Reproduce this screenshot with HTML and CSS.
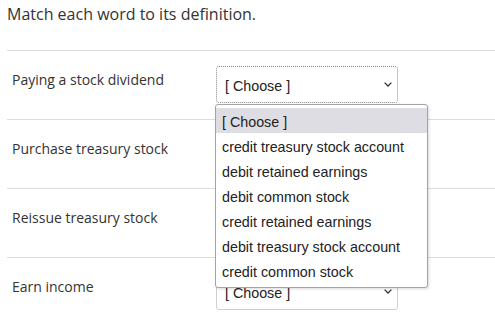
FILE: index.html
```html
<!DOCTYPE html>
<html lang="en">
<head>
    <meta charset="UTF-8">
    <meta name="viewport" content="width=device-width, initial-scale=1.0">
    <title>Matching question</title>
    <link rel="stylesheet" href="styles.css">
</head>
<body>
    <div class="quiz">
        <p class="prompt">Match each word to its definition.</p>
        <div class="answers">
            <div class="answer">
                <span class="word">Paying a stock dividend</span>
                <div class="picker">
                    <div class="select focused">
                        <span>[ Choose ]</span>
                        <svg class="chevron" width="8" height="5" viewBox="0 0 8 5"><path d="M0.6 0.6 L4 4 L7.4 0.6" fill="none" stroke="#333" stroke-width="1.3"/></svg>
                    </div>
                    <ul class="menu">
                        <li class="active">[ Choose ]</li>
                        <li>credit treasury stock account</li>
                        <li>debit retained earnings</li>
                        <li>debit common stock</li>
                        <li>credit retained earnings</li>
                        <li>debit treasury stock account</li>
                        <li>credit common stock</li>
                    </ul>
                </div>
            </div>
            <div class="answer">
                <span class="word">Purchase treasury stock</span>
                <div class="picker">
                    <div class="select">
                        <span>[ Choose ]</span>
                        <svg class="chevron" width="8" height="5" viewBox="0 0 8 5"><path d="M0.6 0.6 L4 4 L7.4 0.6" fill="none" stroke="#333" stroke-width="1.3"/></svg>
                    </div>
                </div>
            </div>
            <div class="answer">
                <span class="word">Reissue treasury stock</span>
                <div class="picker">
                    <div class="select">
                        <span>[ Choose ]</span>
                        <svg class="chevron" width="8" height="5" viewBox="0 0 8 5"><path d="M0.6 0.6 L4 4 L7.4 0.6" fill="none" stroke="#333" stroke-width="1.3"/></svg>
                    </div>
                </div>
            </div>
            <div class="answer">
                <span class="word">Earn income</span>
                <div class="picker">
                    <div class="select">
                        <span>[ Choose ]</span>
                        <svg class="chevron" width="8" height="5" viewBox="0 0 8 5"><path d="M0.6 0.6 L4 4 L7.4 0.6" fill="none" stroke="#333" stroke-width="1.3"/></svg>
                    </div>
                </div>
            </div>
        </div>
    </div>
</body>
</html>
```

FILE: styles.css
```css
body {
    margin: 0;
    padding: 0;
    background-color: #fff;
    font-family: "Open Sans", Arial, sans-serif;
    color: #333;
}
.quiz {
    padding: 3px 0 0 7px;
}
.prompt {
    margin: 0 0 25px;
    font-size: 16px;
    line-height: 22px;
}
.answer {
    display: flex;
    align-items: flex-start;
    padding: 15px 0 16px 5px;
    border-top: 1px solid #dcdcdc;
}
.word {
    width: 204px;
    margin-top: 4px;
    font-size: 14px;
    line-height: 20px;
}
.picker {
    position: relative;
}
.select {
    display: flex;
    align-items: center;
    justify-content: space-between;
    box-sizing: border-box;
    width: 182px;
    height: 37px;
    padding: 3px 5px 0 8px;
    border: 1px solid #cfcfcf;
    border-radius: 3px;
    background: #fff;
    font-family: "Liberation Sans", Arial, sans-serif;
    font-size: 14.3px;
    color: #222;
}
.select .chevron {
    margin-top: -3px;
}
.select.focused {
    border: 1px dotted #8a8a8a;
}
.menu {
    position: absolute;
    top: 38px;
    left: -1px;
    z-index: 2;
    box-sizing: border-box;
    width: 213px;
    margin: 0;
    padding: 3px 0 4px;
    list-style: none;
    background: #fff;
    border: 1px solid #a4a4a4;
    border-radius: 3px;
    box-shadow: 1px 1px 3px rgba(0, 0, 0, 0.15);
    font-family: "Liberation Sans", Arial, sans-serif;
    font-size: 14.3px;
    color: #222;
}
.menu li {
    box-sizing: border-box;
    height: 25px;
    padding: 2px 0 0 6px;
    line-height: 25px;
}
.menu li.active {
    background-color: #dedde3;
}
```
